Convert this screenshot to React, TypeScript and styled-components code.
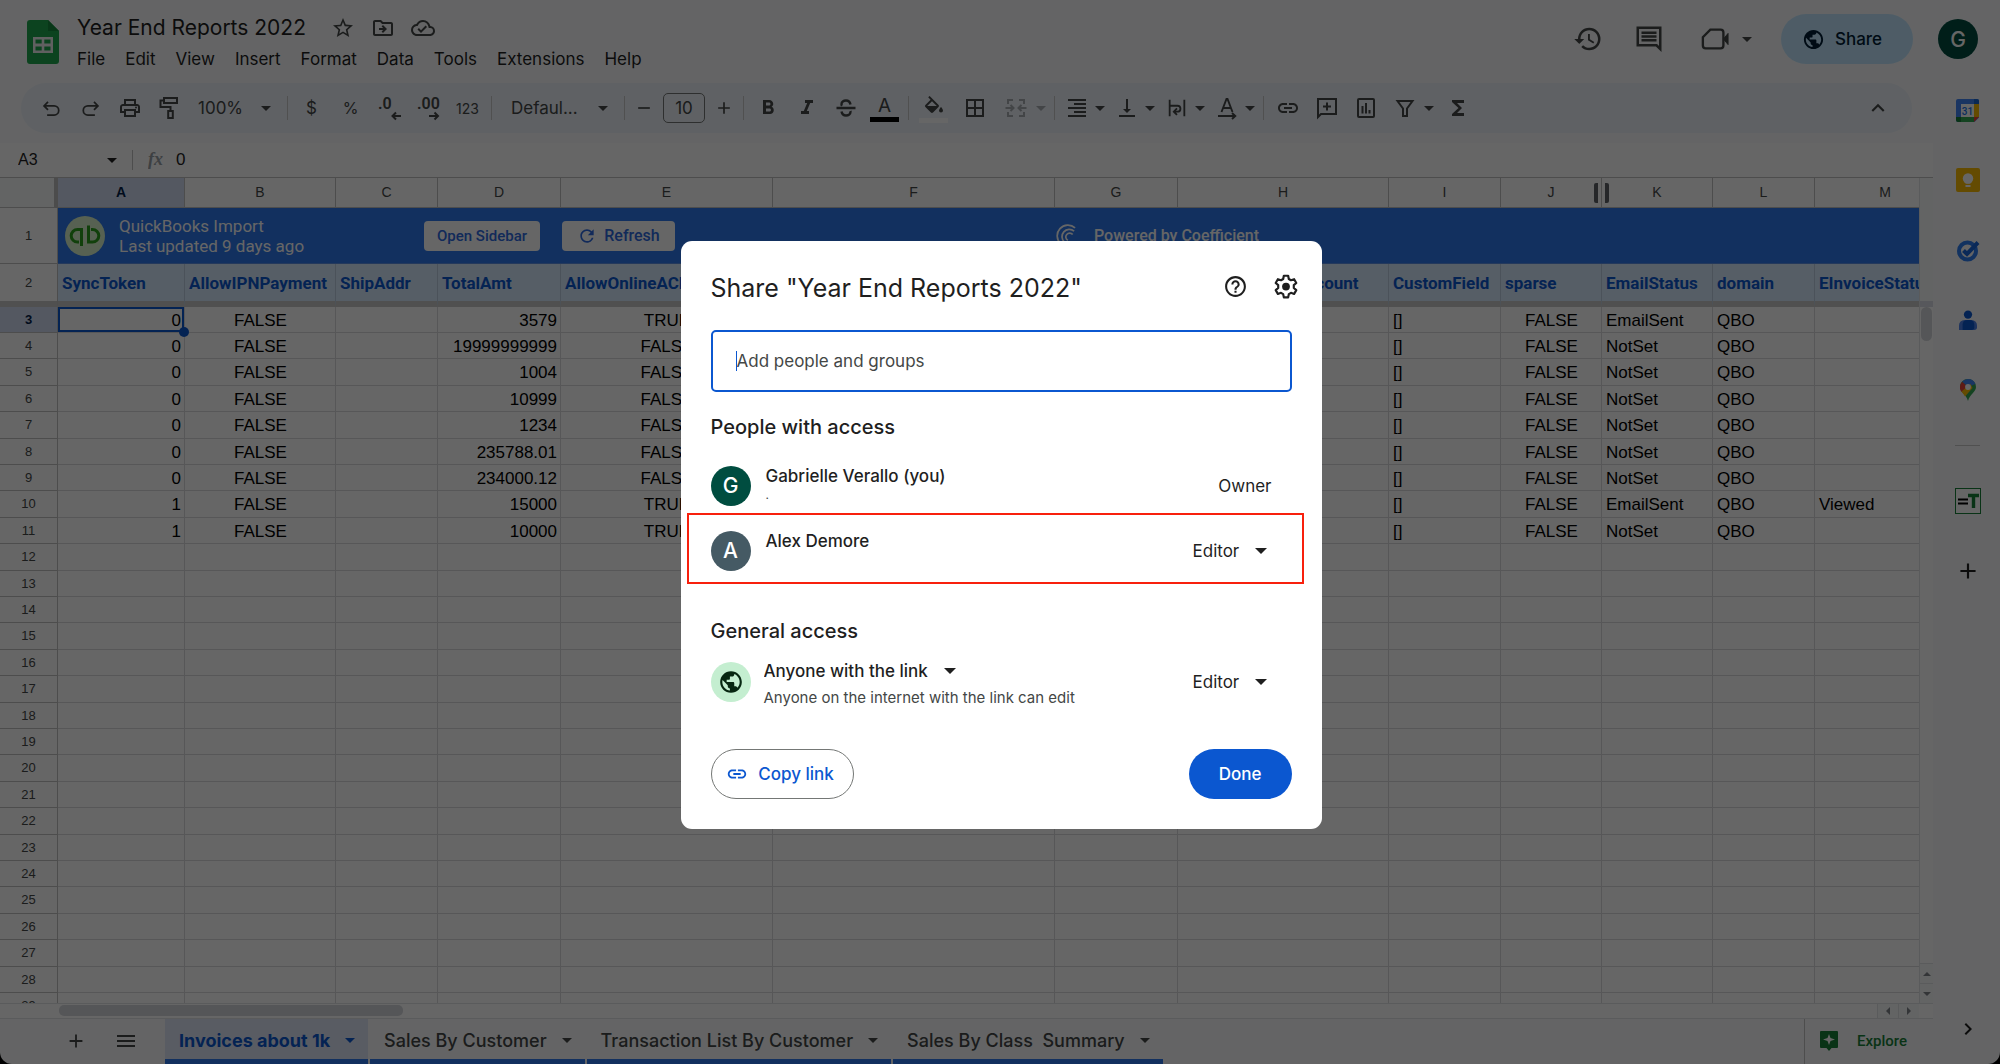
import React from 'react';
import styled, { createGlobalStyle, css } from 'styled-components';
import {
  MdStarBorder,
  MdOutlineDriveFileMove,
  MdOutlineCloudDone,
  MdOutlinePrint,
  MdFormatBold,
  MdFormatItalic,
  MdBorderAll,
  MdFormatAlignRight,
  MdVerticalAlignBottom,
  MdLink,
  MdFunctions,
  MdKeyboardArrowUp,
  MdHistory,
  MdPublic,
  MdHelpOutline,
  MdRefresh,
  MdAdd,
  MdRemove,
  MdMenu,
  MdChevronRight,
} from 'react-icons/md';

const ui = 'Inter, Roboto, "Liberation Sans", sans-serif';
const roboto = 'Roboto, "Liberation Sans", sans-serif';
const arial = '"Liberation Sans", Arial, sans-serif';

const color = {
  ink: '#1f1f1f',
  icon: '#444746',
  blue: '#0b57d0',
  chrome: '#f9fbfd',
  toolbar: '#edf2fa',
  line: '#c0c0c0',
  grid: '#d9dadb',
  soft: '#e1e3e6',
};

const Global = createGlobalStyle`
  *, *::before, *::after { box-sizing: border-box; }
  body { margin: 0; background: #000; font-family: ${ui}; color: ${color.ink}; }
  button, select, input { font: inherit; color: inherit; margin: 0; padding: 0; border: 0; background: none; }
  button { cursor: pointer; }
  svg { display: block; flex: none; }
`;

const Window = styled.div`
  height: 100vh;
  display: flex;
  flex-direction: column;
  overflow: hidden;
  background: ${color.chrome};
  border-radius: 0 0 12px 12px;
`;

/* ---------- title bar ---------- */

const TopBar = styled.header`
  height: 75px;
  flex: none;
  display: flex;
  align-items: center;
  padding: 8px 22px 0 27px;
`;

const Titles = styled.div`
  margin-left: 18px;
  display: flex;
  flex-direction: column;
  gap: 4px;
`;

const TitleRow = styled.div`
  display: flex;
  align-items: center;
  gap: 16px;
  color: ${color.icon};
`;

const DocTitle = styled.h1`
  margin: 0 9px 0 0;
  font-size: 21px;
  line-height: 26px;
  font-weight: 400;
  color: ${color.ink};
`;

const MenuBar = styled.nav`
  display: flex;
  gap: 20px;
`;

const MenuItem = styled.button`
  font-size: 17px;
  line-height: 24px;
`;

const TopActions = styled.div`
  margin: 0 0 5px auto;
  display: flex;
  align-items: center;
  color: ${color.icon};
`;

const MeetGroup = styled.div`
  display: flex;
  align-items: center;
  margin: 0 25px 0 9px;
`;

const IconButton = styled.button<{ $w?: number }>`
  display: flex;
  align-items: center;
  justify-content: center;
  width: ${(p) => p.$w ?? 24}px;
  height: 30px;
`;

const SharePill = styled.button`
  display: flex;
  align-items: center;
  gap: 10px;
  height: 50px;
  width: 132px;
  margin-right: 25px;
  padding-left: 21px;
  border-radius: 25px;
  background: #c2e7ff;
  color: #001d35;
  font-size: 17px;
  font-weight: 500;
`;

const Avatar = styled.span<{ $bg: string }>`
  flex: none;
  display: flex;
  align-items: center;
  justify-content: center;
  width: 40px;
  height: 40px;
  border-radius: 50%;
  background: ${(p) => p.$bg};
  color: #fff;
  font-size: 21px;
  font-weight: 500;
`;

/* ---------- body ---------- */

const Body = styled.div`
  flex: 1;
  min-height: 0;
  display: flex;
`;

const Main = styled.main`
  flex: 1;
  min-width: 0;
  display: flex;
  flex-direction: column;
`;

const Toolbar = styled.div`
  flex: none;
  display: flex;
  align-items: center;
  height: 50px;
  margin: 8px 21px 10px;
  padding: 0 16px 0 11px;
  border-radius: 25px;
  background: ${color.toolbar};
  color: ${color.icon};
`;

const Tool = styled.button<{ $w?: number; $dim?: boolean; $text?: number }>`
  flex: none;
  display: flex;
  flex-direction: column;
  align-items: center;
  justify-content: center;
  width: ${(p) => p.$w ?? 39}px;
  height: 34px;
  font-size: ${(p) => p.$text ?? 17}px;
  ${(p) => p.$dim && css`opacity: 0.4;`}
`;

const Divider = styled.span`
  flex: none;
  width: 1px;
  height: 24px;
  margin: 0 4px;
  background: #c7c7c7;
`;

const Arrow = styled.span<{ $dim?: boolean }>`
  flex: none;
  width: 0;
  height: 0;
  margin-right: 4px;
  border: 5px solid transparent;
  border-top-color: currentColor;
  border-bottom-width: 0;
  ${(p) => p.$dim && css`opacity: 0.4;`}
`;

const Picker = styled.label<{ $w: number; $pad: number }>`
  flex: none;
  display: flex;
  align-items: center;
  width: ${(p) => p.$w}px;
  padding: 0 8px 0 ${(p) => p.$pad}px;
  font-size: 17px;
`;

const BareSelect = styled.select`
  flex: 1;
  min-width: 0;
  appearance: none;
  outline: 0;
  line-height: 24px;
`;

const SizeBox = styled.input`
  width: 42px;
  height: 30px;
  margin: 0 4px;
  border: 1px solid #747775;
  border-radius: 5px;
  text-align: center;
  font-size: 17px;
`;

const Swatch = styled.span<{ $bg: string }>`
  width: 29px;
  height: 5px;
  background: ${(p) => p.$bg};
`;

const Spring = styled.span`
  flex: 1;
`;

const FormulaBar = styled.div`
  flex: none;
  display: flex;
  align-items: center;
  height: 35px;
  background: #fff;
  border-bottom: 1px solid ${color.line};
  padding-left: 18px;
`;

const NameBox = styled.input`
  width: 89px;
  font-family: ${arial};
  font-size: 16px;
`;

const FormulaInput = styled.input`
  flex: 1;
  font-family: ${arial};
  font-size: 17px;
  margin-left: 10px;
`;

const FormulaDivider = styled.span`
  width: 1px;
  height: 20px;
  margin: 0 15px 0 11px;
  background: ${color.line};
`;

/* ---------- sheet ---------- */

const SheetArea = styled.div`
  flex: 1;
  min-height: 0;
  display: flex;
  background: #fff;
`;

const Viewport = styled.div`
  flex: 1;
  min-width: 0;
  overflow: hidden;
`;

const Table = styled.table`
  width: 2012px;
  table-layout: fixed;
  border-collapse: separate;
  border-spacing: 0;
  font-family: ${arial};
  font-size: 17px;
  line-height: 20px;
`;

const ColHead = styled.th<{ $on?: boolean }>`
  position: relative;
  height: 30px;
  padding: 0 0 2px;
  font-size: 14px;
  font-weight: ${(p) => (p.$on ? 700 : 400)};
  color: ${(p) => (p.$on ? '#041e49' : color.icon)};
  background: ${(p) => (p.$on ? '#d3dcf3' : '#fff')};
  border-right: 1px solid ${color.line};
  border-bottom: 1px solid ${color.line};
`;

const Corner = styled.td`
  padding: 0;
  background: #f8f9fa;
  border-right: 4px solid #bdbdbd;
  border-bottom: 1px solid ${color.line};
`;

const UnhideHandle = styled.span`
  position: absolute;
  z-index: 1;
  top: 5px;
  right: -8px;
  width: 15px;
  height: 20px;
  border: solid #5f6368;
  border-width: 0 4px;
  border-radius: 2px;
`;

const RowHead = styled.th<{ $on?: boolean }>`
  padding: 0;
  font-size: 13px;
  font-weight: ${(p) => (p.$on ? 700 : 400)};
  color: ${(p) => (p.$on ? '#041e49' : color.icon)};
  background: ${(p) => (p.$on ? '#d3dcf3' : '#fff')};
  border-right: 1px solid ${color.line};
  border-bottom: 1px solid ${color.line};
`;

const BannerRow = styled.tr`
  height: 56px;
`;

const BannerCell = styled.td`
  padding: 0;
  background: #2d78ed;
  border-bottom: 1px solid #5a8fe6;
`;

const Banner = styled.div`
  display: flex;
  align-items: center;
  padding-left: 7px;
  font-family: ${roboto};
  font-size: 17px;
  color: #fff;
`;

const BannerText = styled.div`
  width: 305px;
  margin-left: 14px;
`;

const BannerButton = styled.button<{ $w: number; $size: number }>`
  display: flex;
  align-items: center;
  justify-content: center;
  gap: 7px;
  width: ${(p) => p.$w}px;
  height: 30px;
  margin-right: 22px;
  border-radius: 4px;
  background: #fff;
  color: #2d6ae0;
  font-size: ${(p) => p.$size}px;
  font-weight: 500;
`;

const Powered = styled.span`
  display: flex;
  align-items: center;
  gap: 17px;
  margin-left: 357px;
  font-size: 16px;
  font-weight: 500;
`;

const FieldRow = styled.tr`
  height: 43px;
  & > * {
    border-bottom: 6px solid #c8c8c8;
  }
`;

const FieldCell = styled.td`
  padding: 0 4px;
  overflow: hidden;
  white-space: nowrap;
  font-family: ${roboto};
  font-size: 17px;
  font-weight: 700;
  color: ${color.blue};
  background: #d8ebff;
  border-right: 1px solid #bccde0;
`;

const DataRow = styled.tr`
  height: 26px;
  &:nth-child(5n + 3),
  &:nth-child(5n + 5) {
    height: 27px;
  }
`;

const Cell = styled.td<{ $align?: string; $on?: boolean }>`
  position: relative;
  padding: 2px 3px 0 4px;
  text-align: ${(p) => p.$align ?? 'left'};
  border-right: 1px solid ${color.grid};
  border-bottom: 1px solid ${color.grid};
  color: #000;
  ${(p) =>
    p.$on &&
    css`
      box-shadow: inset 0 0 0 2px ${color.blue};
      &::after {
        content: '';
        position: absolute;
        z-index: 1;
        right: -5px;
        bottom: -5px;
        width: 10px;
        height: 10px;
        border-radius: 50%;
        background: ${color.blue};
      }
    `}
`;

const VScroll = styled.div`
  flex: none;
  width: 14px;
  display: flex;
  flex-direction: column;
  align-items: center;
  border-left: 1px solid ${color.soft};
  background: #fff;
`;

const FreezeGap = styled.span`
  width: 100%;
  height: 129px;
  flex: none;
  background: #f8f9fa;
  border-bottom: 6px solid #dadce6;
`;

const VThumb = styled.span`
  width: 11px;
  height: 34px;
  border-radius: 6px;
  background: #d5d7dc;
`;

const StepButton = styled.button<{ $side?: boolean }>`
  flex: none;
  display: flex;
  align-items: center;
  justify-content: center;
  width: ${(p) => (p.$side ? '21px' : '100%')};
  height: ${(p) => (p.$side ? '100%' : '20px')};
  background: #f8f9fa;
  border: 0 solid ${color.soft};
  border-width: ${(p) => (p.$side ? '0 0 0 1px' : '1px 0 0')};
`;

const HScroll = styled.div`
  flex: none;
  height: 15px;
  display: flex;
  align-items: flex-start;
  padding: 0 14px 0 59px;
  background: #fff;
  border-top: 1px solid ${color.soft};
`;

const HThumb = styled.span`
  width: 344px;
  height: 11px;
  margin-top: 1px;
  border-radius: 5px;
  background: #d5d7dc;
`;

const BottomBar = styled.footer`
  flex: none;
  height: 46px;
  display: flex;
  border-top: 1px solid ${color.soft};
  color: ${color.icon};
`;

const BottomTools = styled.div`
  width: 165px;
  display: flex;
  align-items: center;
  gap: 26px;
  padding: 0 0 2px 64px;
`;

const SheetTab = styled.button<{ $on?: boolean }>`
  display: flex;
  align-items: center;
  gap: 15px;
  margin-right: 2px;
  padding: 3px 9px 0 14px;
  white-space: pre;
  font-size: 18px;
  font-weight: ${(p) => (p.$on ? 700 : 500)};
  color: ${(p) => (p.$on ? color.blue : color.icon)};
  background: ${(p) => (p.$on ? '#dfe6f7' : 'transparent')};
  border-bottom: 5px solid #2d78ed;
`;

const Explore = styled.button`
  width: 129px;
  margin-left: auto;
  display: flex;
  align-items: center;
  gap: 19px;
  padding: 0 0 2px 15px;
  border-left: 1px solid ${color.line};
  font-family: ${roboto};
  font-size: 15px;
  font-weight: 500;
  color: #188038;
`;

const SidePanel = styled.aside`
  flex: none;
  width: 67px;
  display: flex;
  flex-direction: column;
  align-items: center;
  padding-left: 2px;
  color: ${color.ink};
`;

const SideButton = styled.button`
  flex: none;
  display: flex;
  align-items: center;
  justify-content: center;
  width: 100%;
  height: 70px;
`;

const SideRule = styled.span`
  width: 25px;
  height: 1px;
  flex: none;
  margin: 20px 0;
  background: #c7c7c7;
`;

/* ---------- dialog ---------- */

const Scrim = styled.div`
  position: fixed;
  inset: 0;
  z-index: 5;
  display: flex;
  align-items: center;
  justify-content: center;
  padding: 6px 0 0 2px;
  background: rgba(0, 0, 0, 0.6);
`;

const Dialog = styled.section`
  width: 641px;
  padding: 30px 6px;
  border-radius: 11px;
  background: #fff;
  font-size: 17px;
  line-height: 24px;
`;

const DialogHead = styled.div`
  display: flex;
  align-items: flex-start;
  padding: 0 15px 0 24px;
  gap: 20px;
`;

const DialogTitle = styled.h2`
  flex: 1;
  margin: 0;
  font-size: 25px;
  line-height: 34px;
  font-weight: 400;
`;

const AddField = styled.label`
  display: flex;
  align-items: center;
  height: 62px;
  margin: 25px 24px 0;
  padding-left: 23px;
  border: 2px solid ${color.blue};
  border-radius: 5px;
  &::before {
    content: '';
    width: 1px;
    height: 20px;
    background: ${color.blue};
  }
`;

const AddInput = styled.input`
  flex: 1;
  outline: 0;
  &::placeholder {
    color: ${color.icon};
    opacity: 1;
  }
`;

const Subhead = styled.h3<{ $top: number }>`
  margin: ${(p) => p.$top}px 24px 0;
  font-size: 20px;
  line-height: 26px;
  font-weight: 500;
`;

const Person = styled.div<{ $marked?: boolean }>`
  display: flex;
  align-items: center;
  height: ${(p) => (p.$marked ? 71 : 55)}px;
  margin-top: ${(p) => (p.$marked ? 0 : 18)}px;
  margin-right: 12px;
  padding: ${(p) => (p.$marked ? 5 : 0)}px 26px 0 22px;
  border: 2px solid ${(p) => (p.$marked ? '#f8200d' : 'transparent')};
`;

const PersonName = styled.div`
  flex: 1;
  margin-left: 15px;
  font-weight: 500;
  min-height: 44px;
`;

const Tiny = styled.span`
  display: block;
  font-size: 12px;
  line-height: 14px;
  font-weight: 400;
  color: ${color.icon};
`;

const Role = styled.span`
  padding-right: 4px;
`;

const RoleSelect = styled.label<{ $strong?: boolean }>`
  display: inline-flex;
  align-items: center;
  gap: 15px;
  padding-right: ${(p) => (p.$strong ? 0 : 9)}px;
  font-weight: ${(p) => (p.$strong ? 500 : 400)};
  select {
    flex: none;
  }
`;

const BigArrow = styled.span`
  border: 6px solid transparent;
  border-top-color: ${color.ink};
  border-bottom-width: 0;
`;

const Access = styled.div`
  display: flex;
  align-items: center;
  margin-top: 9px;
  padding: 0 40px 0 24px;
`;

const GlobeBadge = styled.span`
  flex: none;
  display: flex;
  align-items: center;
  justify-content: center;
  width: 40px;
  height: 40px;
  border-radius: 50%;
  background: #c4eed0;
  color: #072711;
`;

const AccessText = styled.div`
  flex: 1;
  margin-left: 13px;
  padding-top: 6px;
`;

const AccessNote = styled.p`
  margin: 3px 0 0;
  font-size: 15px;
  line-height: 24px;
  color: ${color.icon};
`;

const DialogFoot = styled.div`
  display: flex;
  justify-content: space-between;
  margin: 39px 24px 0;
`;

const Pill = styled.button<{ $solid?: boolean }>`
  display: flex;
  align-items: center;
  justify-content: center;
  gap: 10px;
  width: ${(p) => (p.$solid ? 103 : 143)}px;
  height: 50px;
  padding-right: ${(p) => (p.$solid ? 0 : 4)}px;
  border-radius: 25px;
  font-weight: 500;
  color: ${(p) => (p.$solid ? '#fff' : color.blue)};
  background: ${(p) => (p.$solid ? color.blue : '#fff')};
  border: ${(p) => (p.$solid ? '0' : '1px solid #747775')};
`;

/* ---------- drawings ---------- */

const Svg = ({ s = 24, w = 2, children, vb = '0 0 24 24' }: { s?: number; w?: number; children: React.ReactNode; vb?: string }) => (
  <svg width={s} height={s} viewBox={vb} fill="none" stroke="currentColor" strokeWidth={w} aria-hidden="true">
    {children}
  </svg>
);

const SheetsLogo = () => (
  <svg width="32" height="44" viewBox="0 0 32 44" aria-hidden="true">
    <path d="M3 0h18l11 11v30a3 3 0 0 1-3 3H3a3 3 0 0 1-3-3V3a3 3 0 0 1 3-3z" fill="#1fa84f" />
    <path d="M21 0l11 11H21z" fill="#168a3c" />
    <path d="M6 17h20v16H6zM8.500 19.500v4h6.200v-4zm8.800 0v4h6.200v-4zM8.500 26.500v4h6.200v-4zm8.800 0v4h6.200v-4z" fill="#f1f1f1" fillRule="evenodd" />
  </svg>
);

const Undo = () => <Svg s={21}><path d="M8 4.500L3.500 9 8 13.500M4 9h11a5 5 0 0 1 0 10.500H7" /></Svg>;
const Redo = () => <Svg s={21}><path d="M16 4.500L20.500 9 16 13.500M20 9H9a5 5 0 0 0 0 10.500h8" /></Svg>;
const Roller = () => (
  <Svg s={24}><path d="M7 2h13v5H7zM7 4.500H3.500V11h10v4M11.200 15h4.600v7h-4.600z" /></Svg>
);
const Strike = () => (
  <Svg s={24}><path d="M2.500 12h19M16.500 8.500C16 6 14.500 4.500 12 4.500S7.500 6 7.500 8.200c0 .6.200 1.200.5 1.600M7.500 15.500c.5 2.500 2 4 4.500 4s4.500-1.500 4.500-3.700c0-.3 0-.5-.1-.8" strokeWidth="2.400" /></Svg>
);
const Fill = () => (
  <svg width="24" height="24" viewBox="0 0 24 24" fill="currentColor" aria-hidden="true">
    <path d="M16.600 10.900L7.600 1.900 6.200 3.300l2.400 2.400-5.200 5.200a1.500 1.500 0 0 0 0 2.100l5.500 5.500c.6.600 1.500.6 2.100 0l5.500-5.500c.6-.6.600-1.500.1-2.100zM5.200 12L10 7.200l4.800 4.800zM19 13s-2 2.200-2 3.500a2 2 0 0 0 4 0c0-1.300-2-3.500-2-3.500z" />
  </svg>
);
const Merge = () => (
  <Svg s={24}><path d="M9 4H4v4M4 16v4h5M15 4h5v4M20 16v4h-5M1.500 12H9M6.500 9l3 3-3 3M22.500 12H15M17.500 9l-3 3 3 3" /></Svg>
);
const Wrap = () => (
  <Svg s={22}><path d="M4 3v18M20 3v18M4 9.500h8.500a3.200 3.200 0 0 1 0 6.500H9M12 12.500L8.500 16l3.500 3.500" /></Svg>
);
const Rotate = () => (
  <Svg s={24}><path d="M6.500 16L11.500 3h1l5 13M8.300 12h7.400M3 20h17M17 17l3.300 3-3.300 3" strokeWidth="1.900" /></Svg>
);
const Comment = () => (
  <Svg s={24}><path d="M3 21V3h18v15H6zM12 6.500v8M8 10.500h8" /></Svg>
);
const Chart = () => (
  <Svg s={24}><rect x="4" y="3" width="16" height="18" rx="1" /><path d="M8.500 10v7.500M12 7v10.500M15.500 14v3.500" /></Svg>
);
const Funnel = () => <Svg s={24}><path d="M4.500 5h15L14 12.500V20h-4v-7.500z" /></Svg>;
const Notes = () => (
  <Svg s={30}><path d="M3 3h18v17l-3-3H3zM6 7h12M6 10h12M6 13h12" /></Svg>
);
const Video = () => (
  <svg width="28" height="28" viewBox="0 0 30 30" aria-hidden="true">
    <path d="M10 5h11a3 3 0 0 1 3 3v14a3 3 0 0 1-3 3H5a3 3 0 0 1-3-3V13z" fill="none" stroke="currentColor" strokeWidth="2.500" />
    <path d="M24 15l5-6v12z" fill="currentColor" stroke="currentColor" />
  </svg>
);
const Gear = () => (
  <Svg s={26}>
    <path d="M10 2.500h4l.6 3 2 1.200 2.900-1 2 3.500-2.300 2v2.600l2.300 2-2 3.500-2.900-1-2 1.200-.6 3h-4l-.6-3-2-1.200-2.900 1-2-3.500 2.300-2v-2.600l-2.300-2 2-3.500 2.900 1 2-1.200z" strokeLinejoin="round" />
    <circle cx="12" cy="12.500" r="3.600" fill="currentColor" stroke="none" />
  </Svg>
);
const QbLogo = () => (
  <svg width="40" height="40" viewBox="0 0 40 40" aria-hidden="true">
    <circle cx="20" cy="20" r="20" fill="#d9f2cc" />
    <path d="M16.500 30V13.500h-4a6.300 6.300 0 0 0 0 12.600h1.500M23.500 9.500v16.600h4a6.300 6.300 0 0 0 0-12.600H26" fill="none" stroke="#2ca01c" strokeWidth="3" />
  </svg>
);
const Coefficient = () => (
  <Svg s={23} w={1.800}><path d="M22 4A10 10 0 1 0 7 20.500M21 7.500A7 7 0 1 0 11 19M19.500 11a4 4 0 1 0-5 6" /></Svg>
);
const CalendarLogo = () => (
  <svg width="23" height="23" viewBox="0 0 23 23" aria-hidden="true">
    <rect width="23" height="23" rx="2" fill="#4285f4" />
    <path d="M18 0h3a2 2 0 0 1 2 2v3h-5z" fill="#1967d2" />
    <path d="M18 5h5v13h-5z" fill="#fbbc04" />
    <path d="M5 18h13v5H5z" fill="#34a853" />
    <path d="M0 18h5v5H2a2 2 0 0 1-2-2z" fill="#188038" />
    <path d="M18 18h5l-5 5z" fill="#ea4335" />
    <path d="M23 18.500V23h-4.500z" fill="#f9fbfd" />
    <path d="M5 5h13v13H5z" fill="#fff" />
    <text x="11.500" y="15.500" textAnchor="middle" fontFamily="Roboto, sans-serif" fontSize="10" fontWeight="500" fill="#1a73e8">31</text>
  </svg>
);
const KeepLogo = () => (
  <svg width="24" height="24" viewBox="0 0 24 24" aria-hidden="true">
    <rect width="24" height="24" rx="2" fill="#fbbc04" />
    <circle cx="12" cy="10.500" r="5.200" fill="#fff" />
    <path d="M9.500 13h5v2.500h-5zM9.500 17h5v2h-5z" fill="#fff" />
  </svg>
);
const TasksLogo = () => (
  <svg width="24" height="24" viewBox="0 0 24 24" aria-hidden="true">
    <circle cx="11.500" cy="13" r="8.500" fill="none" stroke="#2f7df0" strokeWidth="4" />
    <path d="M7.500 12.500l3.500 3.500L22 4.500" fill="none" stroke="#1a67dc" strokeWidth="4" />
  </svg>
);
const ContactsLogo = () => (
  <svg width="18" height="22" viewBox="0 0 20 24" aria-hidden="true">
    <circle cx="10" cy="6" r="4.600" fill="#0b57d0" />
    <path d="M0 23v-5a6 6 0 0 1 6-6h8a6 6 0 0 1 6 6v2a3 3 0 0 1-3 3z" fill="#4f83ea" />
    <path d="M4 23v-6a5 5 0 0 1 5-5h3a5 5 0 0 1 5 5v3a3 3 0 0 1-3 3z" fill="#0b57d0" />
  </svg>
);
const MapsLogo = () => (
  <svg width="16" height="22" viewBox="0 0 16 22" aria-hidden="true">
    <path d="M8 0a8 8 0 0 1 8 8c0 5-6 7-8 14-2-7-8-9-8-14a8 8 0 0 1 8-8z" fill="#34a853" />
    <path d="M8 0a8 8 0 0 1 7.400 5L8 8 2 2.800A8 8 0 0 1 8 0z" fill="#4285f4" />
    <path d="M2 2.800L8 8l-6.500 5A8 8 0 0 1 2 2.800z" fill="#ea4335" />
    <path d="M1.500 12.500L10.500 5l2 4-7.500 8.500c-1.200-2-2.500-3.500-3.500-5z" fill="#fbbc04" />
    <circle cx="8" cy="8" r="2.900" fill="#fff" />
  </svg>
);
const TableLogo = () => (
  <svg width="26" height="26" viewBox="0 0 26 26" aria-hidden="true">
    <rect x="0.500" y="0.500" width="25" height="25" fill="#fff" stroke="#188038" />
    <path d="M3 11.500h10M3 15.500h10" stroke="#000" strokeWidth="2" />
    <path d="M13 7.500h11M18.500 7v13" stroke="#188038" strokeWidth="3.400" />
  </svg>
);
const ExploreLogo = () => (
  <svg width="18" height="20" viewBox="0 0 18 20" aria-hidden="true">
    <path d="M1 0h16a1 1 0 0 1 1 1v15a1 1 0 0 1-1 1h-5.500L9 20l-2.500-3H1a1 1 0 0 1-1-1V1a1 1 0 0 1 1-1z" fill="#188038" />
    <path d="M9 3l1.500 4L15 8.500 10.500 10 9 14l-1.500-4L3 8.500 7.500 7z" fill="#fff" />
  </svg>
);
const Tri = ({ d }: { d: string }) => (
  <svg width="8" height="8" viewBox="0 0 8 8" aria-hidden="true"><path d={d} fill="#80868b" /></svg>
);
const Decimal = ({ label, arrow }: { label: string; arrow: string }) => (
  <svg width="26" height="26" viewBox="0 0 26 26" fill="none" stroke="currentColor" strokeWidth="2" aria-hidden="true">
    <text x="1" y="14" fontFamily="Roboto, sans-serif" fontSize="16" fontWeight="600" fill="currentColor" stroke="none">{label}</text>
    <path d={arrow} />
  </svg>
);

/* ---------- data ---------- */

const columns: [string, number][] = [
  ['A', 127], ['B', 151], ['C', 102], ['D', 123], ['E', 212], ['F', 282], ['G', 123],
  ['H', 211], ['I', 112], ['J', 101], ['K', 111], ['L', 102], ['M', 141],
];

const fields = [
  'SyncToken', 'AllowIPNPayment', 'ShipAddr', 'TotalAmt', 'AllowOnlineACHPayment', '', '',
  'ApplyTaxAfterDiscount', 'CustomField', 'sparse', 'EmailStatus', 'domain', 'EInvoiceStatus',
];

const rec = (sync: string, amt: string, ach: string, email: string, inv = '') => [
  sync, 'FALSE', '', amt, ach, '', '', '', '[]', 'FALSE', email, 'QBO', inv,
];

const records = [
  rec('0', '3579', 'TRUE', 'EmailSent'),
  rec('0', '19999999999', 'FALSE', 'NotSet'),
  rec('0', '1004', 'FALSE', 'NotSet'),
  rec('0', '10999', 'FALSE', 'NotSet'),
  rec('0', '1234', 'FALSE', 'NotSet'),
  rec('0', '235788.01', 'FALSE', 'NotSet'),
  rec('0', '234000.12', 'FALSE', 'NotSet'),
  rec('1', '15000', 'TRUE', 'EmailSent', 'Viewed'),
  rec('1', '10000', 'TRUE', 'NotSet'),
];

const align = ['right', 'center', 'left', 'right', 'center', 'left', 'left', 'left', 'left', 'center', 'left', 'left', 'left'];
const rowNumbers = Array.from({ length: 27 }, (_, i) => i + 3);
const menus = ['File', 'Edit', 'View', 'Insert', 'Format', 'Data', 'Tools', 'Extensions', 'Help'];
const tabs = ['Invoices about 1k', 'Sales By Customer', 'Transaction List By Customer', 'Sales By Class  Summary'];

const Grid = () => (
  <Table>
    <colgroup>
      <col width={58} />
      {columns.map(([n, w]) => <col key={n} width={w} />)}
      <col />
    </colgroup>
    <thead>
      <tr>
        <Corner />
        {columns.map(([n]) => (
          <ColHead key={n} scope="col" $on={n === 'A'}>
            {n}
            {n === 'J' && <UnhideHandle />}
          </ColHead>
        ))}
      </tr>
    </thead>
    <tbody>
      <BannerRow>
        <RowHead scope="row">1</RowHead>
        <BannerCell colSpan={13}>
          <Banner>
            <QbLogo />
            <BannerText>QuickBooks Import<br />Last updated 9 days ago</BannerText>
            <BannerButton $w={116} $size={15}>Open Sidebar</BannerButton>
            <BannerButton $w={113} $size={16}><MdRefresh size={20} />Refresh</BannerButton>
            <Powered><Coefficient />Powered by Coefficient</Powered>
          </Banner>
        </BannerCell>
      </BannerRow>
      <FieldRow>
        <RowHead scope="row">2</RowHead>
        {fields.map((f, i) => <FieldCell key={i}>{f}</FieldCell>)}
      </FieldRow>
    </tbody>
    <tbody>
      {rowNumbers.map((n, r) => (
        <DataRow key={n}>
          <RowHead scope="row" $on={n === 3}>{n}</RowHead>
          {columns.map(([c], i) => (
            <Cell key={c} $align={align[i]} $on={n === 3 && c === 'A'}>{records[r]?.[i]}</Cell>
          ))}
        </DataRow>
      ))}
    </tbody>
  </Table>
);

const ToolRow = () => (
  <Toolbar role="toolbar" aria-label="Formatting">
    <Tool aria-label="Undo"><Undo /></Tool>
    <Tool aria-label="Redo"><Redo /></Tool>
    <Tool aria-label="Print"><MdOutlinePrint size={24} /></Tool>
    <Tool aria-label="Paint format"><Roller /></Tool>
    <Picker $w={95} $pad={10}>
      <BareSelect aria-label="Zoom"><option>100%</option></BareSelect>
      <Arrow />
    </Picker>
    <Divider />
    <Tool>$</Tool>
    <Tool $text={16}>%</Tool>
    <Tool aria-label="Fewer decimals"><Decimal label=".0" arrow="M24 21h-8M19 17.500L15.500 21l3.500 3.500" /></Tool>
    <Tool aria-label="More decimals"><Decimal label=".00" arrow="M13 21h9M18.500 17.500L22 21l-3.500 3.500" /></Tool>
    <Tool $text={14}>123</Tool>
    <Divider />
    <Picker $w={124} $pad={15}>
      <BareSelect aria-label="Font"><option>Defaul...</option></BareSelect>
      <Arrow />
    </Picker>
    <Divider />
    <Tool $w={30} aria-label="Smaller"><MdRemove size={20} /></Tool>
    <SizeBox aria-label="Font size" defaultValue="10" />
    <Tool $w={30} aria-label="Larger"><MdAdd size={20} /></Tool>
    <Divider />
    <Tool aria-label="Bold"><MdFormatBold size={24} /></Tool>
    <Tool aria-label="Italic"><MdFormatItalic size={24} /></Tool>
    <Tool aria-label="Strikethrough"><Strike /></Tool>
    <Tool $text={19} aria-label="Text color">A<Swatch $bg="#000" /></Tool>
    <Divider />
    <Tool $w={41} aria-label="Fill color"><Fill /><Swatch $bg="#fff" /></Tool>
    <Tool $w={41} aria-label="Borders"><MdBorderAll size={24} /></Tool>
    <Tool $w={41} $dim aria-label="Merge cells"><Merge /></Tool>
    <Arrow $dim />
    <Divider />
    <Tool $w={36} aria-label="Horizontal align"><MdFormatAlignRight size={24} /></Tool>
    <Arrow />
    <Tool $w={36} aria-label="Vertical align"><MdVerticalAlignBottom size={24} /></Tool>
    <Arrow />
    <Tool $w={36} aria-label="Wrap text"><Wrap /></Tool>
    <Arrow />
    <Tool $w={36} aria-label="Rotate text"><Rotate /></Tool>
    <Arrow />
    <Divider />
    <Tool aria-label="Insert link"><MdLink size={24} /></Tool>
    <Tool aria-label="Insert comment"><Comment /></Tool>
    <Tool aria-label="Insert chart"><Chart /></Tool>
    <Tool aria-label="Filter"><Funnel /></Tool>
    <Arrow />
    <Tool aria-label="Functions"><MdFunctions size={24} /></Tool>
    <Spring />
    <Tool $w={36} aria-label="Hide menus"><MdKeyboardArrowUp size={26} /></Tool>
  </Toolbar>
);

const ShareDialog = () => (
  <Scrim>
    <Dialog role="dialog" aria-labelledby="share-title">
      <DialogHead>
        <DialogTitle id="share-title">Share "Year End Reports 2022"</DialogTitle>
        <IconButton $w={30} aria-label="Help"><MdHelpOutline size={25} /></IconButton>
        <IconButton $w={30} aria-label="Settings"><Gear /></IconButton>
      </DialogHead>
      <AddField><AddInput aria-label="Add people and groups" placeholder="Add people and groups" /></AddField>
      <Subhead $top={22}>People with access</Subhead>
      <Person>
        <Avatar $bg="#004d40">G</Avatar>
        <PersonName>Gabrielle Verallo (you)<Tiny>.</Tiny></PersonName>
        <Role>Owner</Role>
      </Person>
      <Person $marked>
        <Avatar $bg="#455a64">A</Avatar>
        <PersonName>Alex Demore</PersonName>
        <RoleSelect>
          <BareSelect aria-label="Role of Alex Demore"><option>Editor</option></BareSelect>
          <BigArrow />
        </RoleSelect>
      </Person>
      <Subhead $top={34}>General access</Subhead>
      <Access>
        <GlobeBadge><MdPublic size={26} /></GlobeBadge>
        <AccessText>
          <RoleSelect $strong>
            <BareSelect aria-label="General access"><option>Anyone with the link</option></BareSelect>
            <BigArrow />
          </RoleSelect>
          <AccessNote>Anyone on the internet with the link can edit</AccessNote>
        </AccessText>
        <RoleSelect>
          <BareSelect aria-label="Role of link holders"><option>Editor</option></BareSelect>
          <BigArrow />
        </RoleSelect>
      </Access>
      <DialogFoot>
        <Pill><MdLink size={22} />Copy link</Pill>
        <Pill $solid>Done</Pill>
      </DialogFoot>
    </Dialog>
  </Scrim>
);

export default function App() {
  return (
    <>
      <Global />
      <Window>
        <TopBar>
          <SheetsLogo />
          <Titles>
            <TitleRow>
              <DocTitle>Year End Reports 2022</DocTitle>
              <IconButton aria-label="Star"><MdStarBorder size={24} /></IconButton>
              <IconButton aria-label="Move"><MdOutlineDriveFileMove size={24} /></IconButton>
              <IconButton aria-label="Saved to Drive"><MdOutlineCloudDone size={24} /></IconButton>
            </TitleRow>
            <MenuBar>{menus.map((m) => <MenuItem key={m}>{m}</MenuItem>)}</MenuBar>
          </Titles>
          <TopActions>
            <IconButton $w={61} aria-label="Version history"><MdHistory size={30} /></IconButton>
            <IconButton $w={61} aria-label="Comments"><Notes /></IconButton>
            <MeetGroup>
              <IconButton $w={54} aria-label="Meet"><Video /></IconButton>
              <Arrow />
            </MeetGroup>
            <SharePill><MdPublic size={23} />Share</SharePill>
            <Avatar $bg="#004d40">G</Avatar>
          </TopActions>
        </TopBar>
        <Body>
          <Main>
            <ToolRow />
            <FormulaBar>
              <NameBox aria-label="Name box" defaultValue="A3" />
              <Arrow />
              <FormulaDivider />
              <svg width="18" height="20" viewBox="0 0 18 20" aria-hidden="true">
                <text x="0" y="15" fontFamily="Liberation Serif, serif" fontStyle="italic" fontWeight="700" fontSize="18" fill="#9aa0a6">fx</text>
              </svg>
              <FormulaInput aria-label="Formula" defaultValue="0" />
            </FormulaBar>
            <SheetArea>
              <Viewport><Grid /></Viewport>
              <VScroll>
                <FreezeGap />
                <VThumb />
                <Spring />
                <StepButton aria-label="Scroll up"><Tri d="M0 6l4-4 4 4z" /></StepButton>
                <StepButton aria-label="Scroll down"><Tri d="M0 2l4 4 4-4z" /></StepButton>
              </VScroll>
            </SheetArea>
            <HScroll>
              <HThumb />
              <Spring />
              <StepButton $side aria-label="Scroll left"><Tri d="M6 0L2 4l4 4z" /></StepButton>
              <StepButton $side aria-label="Scroll right"><Tri d="M2 0l4 4-4 4z" /></StepButton>
            </HScroll>
            <BottomBar>
              <BottomTools>
                <IconButton aria-label="Add sheet"><MdAdd size={22} /></IconButton>
                <IconButton aria-label="All sheets"><MdMenu size={24} /></IconButton>
              </BottomTools>
              {tabs.map((t, i) => (
                <SheetTab key={t} $on={i === 0}>{t}<Arrow /></SheetTab>
              ))}
              <Explore><ExploreLogo />Explore</Explore>
            </BottomBar>
          </Main>
          <SidePanel>
            <SideButton aria-label="Calendar"><CalendarLogo /></SideButton>
            <SideButton aria-label="Keep"><KeepLogo /></SideButton>
            <SideButton aria-label="Tasks"><TasksLogo /></SideButton>
            <SideButton aria-label="Contacts"><ContactsLogo /></SideButton>
            <SideButton aria-label="Maps"><MapsLogo /></SideButton>
            <SideRule />
            <SideButton aria-label="Table add-on"><TableLogo /></SideButton>
            <SideButton aria-label="Get add-ons"><MdAdd size={26} /></SideButton>
            <Spring />
            <SideButton aria-label="Hide side panel"><MdChevronRight size={24} /></SideButton>
          </SidePanel>
        </Body>
      </Window>
      <ShareDialog />
    </>
  );
}
